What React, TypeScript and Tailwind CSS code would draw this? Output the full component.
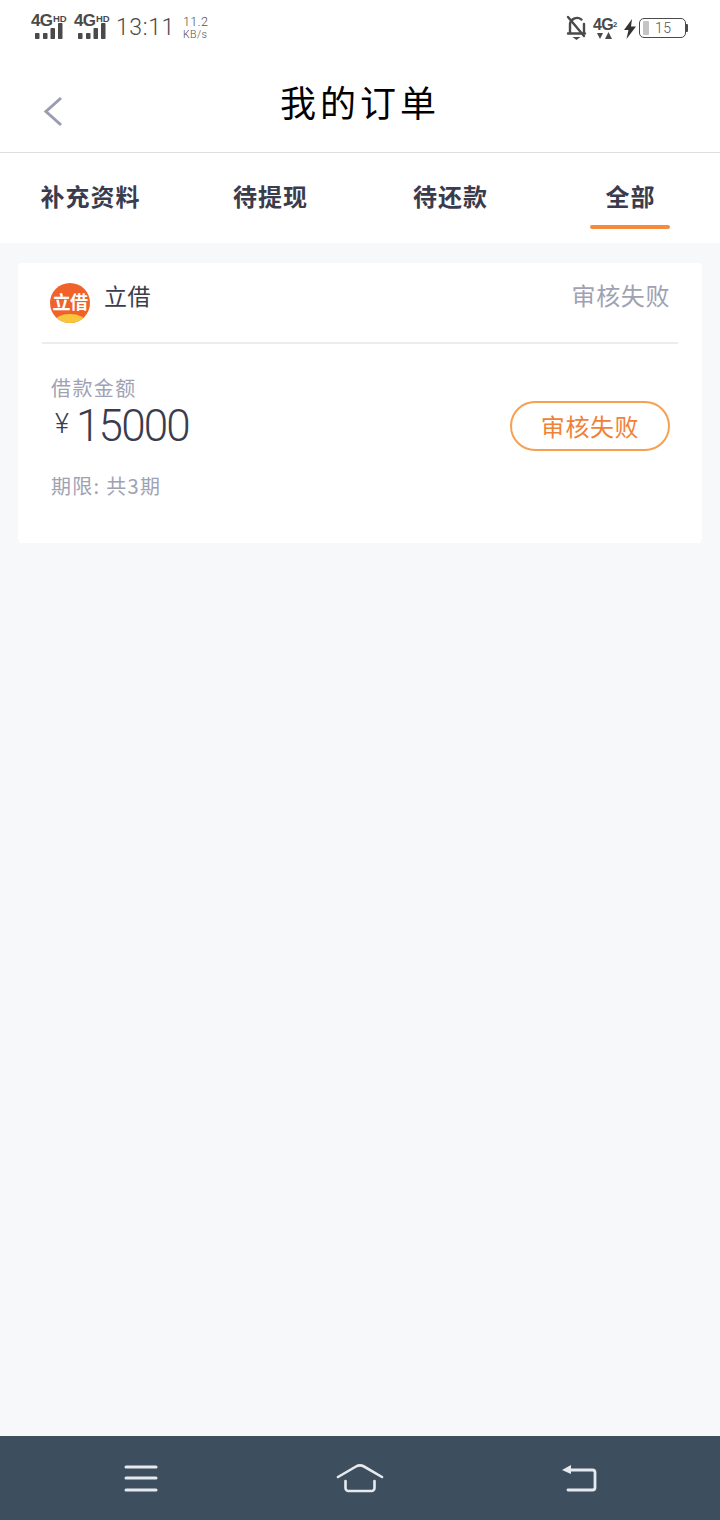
import React from "react";

const CJK = "font-['Noto_Sans_CJK_SC','Noto_Sans',sans-serif]";

function Signal() {
  return (
    <svg width="34" height="16" viewBox="0 0 34 16" className="block">
      <g fill="#4a4a4a">
        <rect x="4" y="10" width="4.500" height="6" rx="0.8" />
        <rect x="12" y="10" width="4.500" height="6" rx="0.8" />
        <rect x="19.500" y="5" width="4.500" height="11" rx="0.8" />
        <rect x="27" y="0" width="4.500" height="16" rx="0.8" />
      </g>
    </svg>
  );
}

function Net() {
  return (
    <div className="relative w-[36px] h-[26px]">
      <span className="absolute left-0 top-[-2px] font-['Liberation_Sans',sans-serif] font-bold text-[17px] leading-[18px] text-[#4a4a4a] tracking-[-0.6px]">4G</span>
      <span className="absolute left-[22px] top-0 font-['Liberation_Sans',sans-serif] font-bold text-[9.5px] leading-[10px] text-[#4a4a4a]">HD</span>
      <div className="absolute left-0 top-[9px]">
        <Signal />
      </div>
    </div>
  );
}

export default function App() {
  const tabs = ["补充资料", "待提现", "待还款", "全部"];
  return (
    <div className={`w-[720px] h-[1520px] flex flex-col bg-[#f6f8fa] overflow-hidden ${CJK}`}>
      {/* status bar */}
      <div className="h-[52px] bg-white flex items-start justify-between pl-[31px] pr-[32px] pt-[14px]">
        <div className="flex items-start">
          <Net />
          <div className="w-[7px]" />
          <Net />
          <span className="ml-[6px] font-['Roboto',sans-serif] font-light text-[23px] leading-[27px] tracking-[0.6px] text-[#4a4a4a]">13:11</span>
          <div className="ml-[8px] mt-[1px] flex flex-col font-['Roboto',sans-serif] text-[#505050] font-light">
            <span className="text-[12.500px] leading-[13px] tracking-[0.4px]">11.2</span>
            <span className="text-[10.500px] leading-[14px] tracking-[0.5px]">KB/s</span>
          </div>
        </div>
        <div className="flex items-start">
          <svg width="22" height="26" viewBox="0 0 22 26" fill="none" className="mt-[1px]">
            <path d="M4 18V10a7 7 0 0 1 11.500-5.400M18 9v9M2 18.500h17" stroke="#4a4a4a" strokeWidth="2.400" strokeLinecap="round" />
            <path d="M2 2l16 19" stroke="#4a4a4a" strokeWidth="2.400" strokeLinecap="round" />
            <path d="M6.500 22h8l-4 3z" fill="#4a4a4a" />
          </svg>
          <div className="relative w-[28px] h-[26px] ml-[5px]">
            <span className="absolute left-0 top-[2px] font-['Liberation_Sans',sans-serif] font-bold text-[16px] leading-[17px] tracking-[-0.6px] text-[#4a4a4a]">4G</span>
            <span className="absolute left-[20px] top-[6px] font-['Liberation_Sans',sans-serif] font-bold text-[7.500px] leading-[10px] text-[#4a4a4a]">2</span>
            <svg width="16" height="8" viewBox="0 0 16 8" className="absolute left-[4px] top-[18px]">
              <path d="M0 1h6L3 7z" fill="#4a4a4a" />
              <path d="M8 7h7L11.500 0z" fill="#4a4a4a" />
            </svg>
          </div>
          <svg width="14" height="20" viewBox="0 0 14 20" className="ml-[2px] mt-[5px]">
            <path d="M9 0L1 11h4.500L3.500 20 13 7.500H8z" fill="#333" />
          </svg>
          <div className="relative ml-[2px] mt-[4px] w-[47px] h-[20px] border border-[#4a4a4a] rounded-[5px]">
            <div className="absolute left-[3px] top-[2px] w-[6px] h-[14px] rounded-[1px] bg-[#c4c4c4]" />
            <span className="absolute left-[15px] top-0 font-['Roboto',sans-serif] font-light text-[14px] leading-[18px] tracking-[0.5px] text-[#555]">15</span>
          </div>
          <div className="mt-[10px] w-[2px] h-[8px] bg-[#4a4a4a] rounded-r-[1px]" />
        </div>
      </div>

      {/* header */}
      <div className="relative h-[101px] bg-white border-b border-[#dedede] flex items-start justify-center">
        <svg width="22" height="32" viewBox="0 0 22 32" fill="none" className="absolute left-[42px] top-[44px]">
          <path d="M19 2L4 15.500 19 29" stroke="#9a9cb0" strokeWidth="3" />
        </svg>
        <span className="mt-[24px] text-[36px] leading-[50px] tracking-[4px] text-black">我的订单</span>
      </div>

      {/* tabs */}
      <div className="h-[90px] bg-white grid grid-cols-4">
        {tabs.map((t, i) => (
          <div key={t} className="relative flex items-start justify-center pt-[26px] pl-[1px]">
            <span className="text-[24px] leading-[34px] font-bold tracking-[1px] text-[#3a3c4e]">{t}</span>
            {i === 3 && <div className="absolute left-[50px] top-[72px] w-[80px] h-[4px] rounded-[2px] bg-[#f58b3c]" />}
          </div>
        ))}
      </div>

      {/* card */}
      <div className="mx-[18px] mt-[20px] h-[280px] bg-white rounded-[4px]">
        <div className="mx-[24px] h-[81px] border-b-2 border-[#ececec] flex items-start justify-between pl-[8px] pr-[8px]">
          <div className="flex items-start">
            <div className="relative mt-[20px] w-[40px] h-[40px] rounded-full bg-[#f0622a] overflow-hidden flex justify-center">
              <span className="mt-[6px] text-[18px] leading-[24px] font-bold text-white tracking-[-0.5px]">立借</span>
              <div className="absolute left-[4px] bottom-[-8px] w-[32px] h-[17px] rounded-[50%] bg-[#f8c53c]" />
            </div>
            <span className="ml-[14px] mt-[16px] text-[23px] leading-[32px] tracking-[0.5px] text-[#3a3c4e]">立借</span>
          </div>
          <span className="mt-[16px] text-[24px] leading-[32px] tracking-[0.6px] text-[#a0a2b4]">审核失败</span>
        </div>
        <div className="flex items-start justify-between pl-[33px] pr-[32px]">
          <div className="flex flex-col">
            <span className="mt-[31px] text-[20px] leading-[26px] tracking-[1.400px] text-[#a0a2b4]">借款金额</span>
            <div className="flex items-baseline text-[#3a3c4e] mt-[2px] h-[46px]">
              <span className="ml-[4px] text-[27px] leading-[30px] font-['Roboto',sans-serif] font-light -translate-y-[8px]">¥</span>
              <span className="ml-[7px] text-[44px] leading-[46px] tracking-[-1.800px] font-['Roboto',sans-serif] font-light">15000</span>
            </div>
            <span className="mt-[23px] text-[20px] leading-[28px] tracking-[1.300px] text-[#a0a2b4]">期限: 共3期</span>
          </div>
          <div className="mt-[57px] w-[160px] h-[50px] rounded-full border-2 border-[#f6a052] flex items-center justify-center text-[24px] tracking-[0.6px] text-[#f08238]">
            审核失败
          </div>
        </div>
      </div>

      <div className="flex-1" />

      {/* nav */}
      <div className="h-[84px] bg-[#3d4f5f] flex items-start justify-between pl-[124px] pr-[123px]">
        <svg width="34" height="28" viewBox="0 0 34 28" fill="none" className="mt-[29px]" stroke="#e6eaee" strokeWidth="3" strokeLinecap="round">
          <path d="M2 2h30M2 13h30M2 25h30" />
        </svg>
        <svg width="48" height="32" viewBox="0 0 48 32" fill="none" className="mt-[27px] ml-[1px]" stroke="#e6eaee" strokeWidth="2.600" strokeLinecap="round">
          <path d="M2 14L20 3.500c2.500-1.400 5.500-1.400 8 0L46 14" />
          <path d="M9.500 18v7a3 3 0 0 0 3 3h23a3 3 0 0 0 3-3v-7" />
        </svg>
        <svg width="36" height="30" viewBox="0 0 36 30" fill="none" className="mt-[27px]">
          <path d="M1 7L10 2v9z" fill="#e6eaee" />
          <path d="M9 7h22.500a2.500 2.500 0 0 1 2.500 2.500v15a2.500 2.500 0 0 1-2.500 2.500H7" stroke="#e6eaee" strokeWidth="2.800" strokeLinecap="round" />
        </svg>
      </div>
    </div>
  );
}
